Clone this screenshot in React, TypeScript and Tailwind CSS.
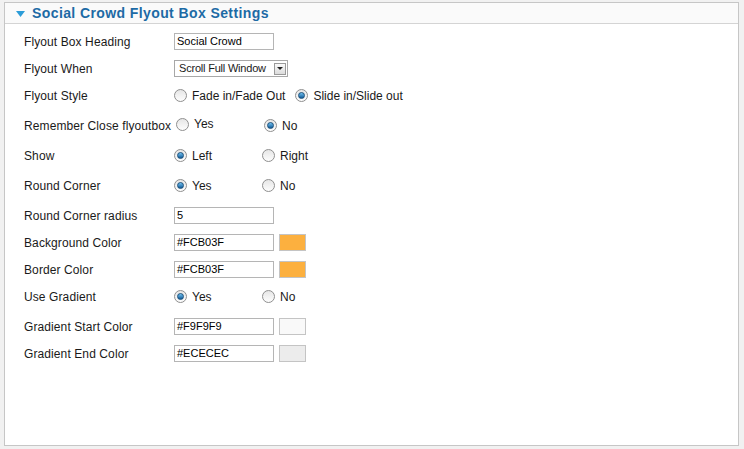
import React from 'react';

const font = { fontFamily: '"Liberation Sans", Arial, sans-serif' };

function Radio({ checked }: { checked?: boolean }) {
    return (
        <span className="relative inline-flex w-[13px] h-[13px] shrink-0 items-center justify-center rounded-full border border-[#8f8f8f] bg-gradient-to-b from-[#e6e6e6] to-[#fdfdfd]">
            {checked && (
                <span className="w-[7px] h-[7px] rounded-full bg-gradient-to-b from-[#6fc0ef] to-[#0c5b98] border border-[#1a4f7a]" />
            )}
        </span>
    );
}

function Option({ label, checked, wide }: { label: string; checked?: boolean; wide?: boolean }) {
    return (
        <span className={`inline-flex items-center gap-[5px] ${wide ? '' : 'w-[88px]'}`}>
            <Radio checked={checked} />
            <span>{label}</span>
        </span>
    );
}

function TextInput({ value }: { value: string }) {
    return (
        <div className="w-[100px] h-[17px] border border-[#b5b5b5] bg-white pl-[2px] text-[11px] leading-[15px] text-black">
            {value}
        </div>
    );
}

function Swatch({ color }: { color: string }) {
    return <div className="w-[27px] h-[17px] border border-[#c4c4c4] ml-[5px]" style={{ backgroundColor: color }} />;
}

function Row({ label, children, extra }: { label: string; children: React.ReactNode; extra?: boolean }) {
    return (
        <div className={`flex items-center h-[27px] ${extra ? 'mt-[3px]' : ''}`}>
            <div className="min-w-[150px] whitespace-nowrap tracking-[0.1px]">{label}</div>
            {children}
        </div>
    );
}

export default function App() {
    return (
        <div className="w-[744px] h-[449px] bg-[#f1f1f1] pt-[2px] pl-[4px] text-[12px] text-[#1a1a1a]" style={font}>
            <div className="w-[735px] h-[444px] bg-white border border-[#c6c6c6]">
                <div className="h-[21px] bg-[#fafafa] border-b border-[#d4d4d4] flex items-center pl-[11px]">
                    <svg width="9" height="6" viewBox="0 0 9 6" className="mr-[7px] mt-[1px]">
                        <polygon points="0,0 9,0 4.5,6" fill="#2c9cd8" />
                    </svg>
                    <span className="font-bold text-[14px] text-[#1d6aa5] tracking-[0.4px]">Social Crowd Flyout Box Settings</span>
                </div>
                <div className="pl-[19px] pt-[4px]">
                    <Row label="Flyout Box Heading">
                        <TextInput value="Social Crowd" />
                    </Row>
                    <Row label="Flyout When">
                        <div className="flex items-center w-[114px] h-[17px] border border-[#a8a8a8] bg-white pl-[4px] pr-[1px] text-[11px]">
                            <span className="flex-1 tracking-[-0.2px]">Scroll Full Window</span>
                            <span className="w-[12px] h-[12px] border border-[#9a9a9a] bg-gradient-to-b from-[#fafafa] to-[#dcdcdc] flex items-center justify-center">
                                <svg width="6" height="3" viewBox="0 0 6 3">
                                    <polygon points="0,0 6,0 3,3" fill="#222" />
                                </svg>
                            </span>
                        </div>
                    </Row>
                    <Row label="Flyout Style">
                        <Option label="Fade in/Fade Out" wide />
                        <span className="ml-[10px]">
                            <Option label="Slide in/Slide out" checked wide />
                        </span>
                    </Row>
                    <Row label="Remember Close flyoutbox" extra>
                        <span className="ml-[2px]">
                            <Option label="Yes" />
                        </span>
                        <Option label="No" checked />
                    </Row>
                    <Row label="Show" extra>
                        <Option label="Left" checked />
                        <Option label="Right" />
                    </Row>
                    <Row label="Round Corner" extra>
                        <Option label="Yes" checked />
                        <Option label="No" />
                    </Row>
                    <Row label="Round Corner radius" extra>
                        <TextInput value="5" />
                    </Row>
                    <Row label="Background Color">
                        <TextInput value="#FCB03F" />
                        <Swatch color="#fcb03f" />
                    </Row>
                    <Row label="Border Color">
                        <TextInput value="#FCB03F" />
                        <Swatch color="#fcb03f" />
                    </Row>
                    <Row label="Use Gradient">
                        <Option label="Yes" checked />
                        <Option label="No" />
                    </Row>
                    <Row label="Gradient Start Color" extra>
                        <TextInput value="#F9F9F9" />
                        <Swatch color="#f9f9f9" />
                    </Row>
                    <Row label="Gradient End Color">
                        <TextInput value="#ECECEC" />
                        <Swatch color="#ececec" />
                    </Row>
                </div>
            </div>
        </div>
    );
}
